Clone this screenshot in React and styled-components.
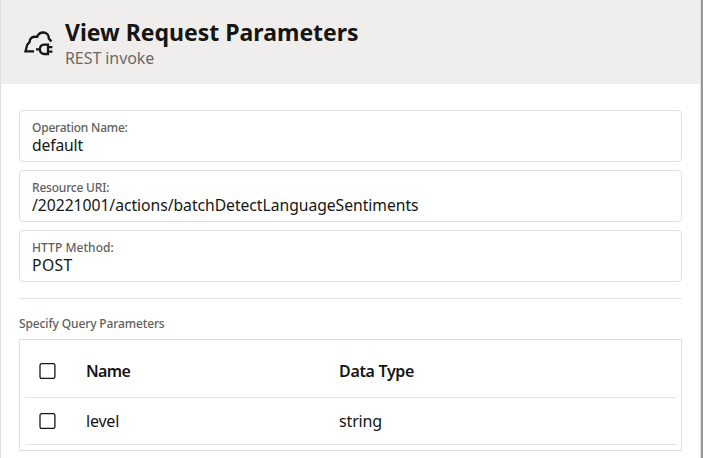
import React from 'react';
import styled, { createGlobalStyle } from 'styled-components';

const GlobalStyle = createGlobalStyle`
  * { box-sizing: border-box; }
  body {
    margin: 0;
    overflow: hidden;
    background: #fff;
    color: #161513;
    font-family: "Noto Sans", "Open Sans", sans-serif;
  }
`;

const Panel = styled.section`
  width: 703px;
  height: 458px;
  border-left: 1px solid #e0e0e0;
  border-right: 2px solid #979896;
  display: flex;
  flex-direction: column;
`;

const Inner = styled.div`
  flex: 1;
  border-right: 1px solid #e2e2e1;
`;

const Header = styled.header`
  height: 84px;
  padding: 18px 0 0 22px;
  display: flex;
  gap: 12px;
  background: #efeeec;
`;

const CloudIcon = styled.svg`
  width: 30px;
  height: 30px;
  margin-top: 11px;
  fill: none;
  stroke: #161513;
  stroke-width: 2.3;
`;

const Title = styled.h1`
  margin: 0;
  font-size: 23px;
  line-height: 29px;
  font-weight: 700;
  white-space: nowrap;
`;

const Subtitle = styled.div`
  font-size: 16px;
  line-height: 22px;
  color: #6b6967;
  letter-spacing: -0.08px;
`;

const Content = styled.main`
  padding: 26px 18px 0;
`;

const Fields = styled.div`
  display: grid;
  gap: 8px;
  padding-bottom: 16px;
  border-bottom: 1px solid #e4e3e2;
`;

const Field = styled.div`
  height: 52px;
  padding: 9px 12px 0;
  border: 1px solid #e1e0df;
  border-radius: 4px;
`;

const Label = styled.div`
  font-size: 12px;
  line-height: 16px;
  font-weight: 500;
  color: #62605d;
  letter-spacing: ${(p) => p.$track || '0'};
`;

const Value = styled.div`
  margin-top: -1px;
  font-size: 15.7px;
  line-height: 20px;
  letter-spacing: ${(p) => p.$track || '0'};
`;

const SectionLabel = styled(Label)`
  margin: 17px 0 7px;
`;

const Table = styled.div`
  height: 112px;
  padding: 0 5px;
  border: 1px solid #e1e0df;
`;

const Row = styled.div`
  height: ${(p) => p.$height}px;
  padding: ${(p) => p.$top}px 0 0 14px;
  display: grid;
  grid-template-columns: 47px 253px 1fr;
  align-items: start;
  border-bottom: 1px solid #e4e3e2;
`;

const CheckboxIcon = styled.svg`
  width: 17px;
  height: 17px;
  margin-top: 4px;
  fill: none;
  stroke: #161513;
  stroke-width: 1.3;
`;

const Checkbox = () => (
  <CheckboxIcon viewBox="0 0 17 17" role="checkbox" aria-checked="false">
    <rect x="1" y="0.7" width="14.9" height="14.7" rx="1.6" />
  </CheckboxIcon>
);

const Cell = styled.span`
  font-size: 16px;
  line-height: 24px;
  font-weight: ${(p) => (p.$head ? 600 : 400)};
  letter-spacing: ${(p) => p.$track || '0'};
`;

const fields = [
  { label: 'Operation Name:', value: 'default', labelTrack: '-0.22px', track: '-0.16px' },
  {
    label: 'Resource URI:',
    value: '/20221001/actions/batchDetectLanguageSentiments',
    labelTrack: '-0.2px',
    track: '-0.03px',
  },
  { label: 'HTTP Method:', value: 'POST', labelTrack: '0.06px', track: '0.4px' },
];

export default function App() {
  return (
    <Panel>
      <GlobalStyle />
      <Inner>
        <Header>
          <CloudIcon viewBox="0 0 30 30">
            <path d="M11 22.3H2.5L4.2 15.8L6.5 13.2C6.5 9.3 9.6 7 14 8C15.2 5 17.4 3.5 20.2 3.5C23.7 3.5 26.1 6.4 25.8 9.6L28.4 12.4" />
            <path d="M13 20.3H17M25 15.6H21C18.4 15.9 16.9 17.8 16.9 20.3C16.9 22.8 18.4 24.7 21 25H25ZM25 18.2H29.4M25 22.6H29.4" />
          </CloudIcon>
          <div>
            <Title>View Request Parameters</Title>
            <Subtitle>REST invoke</Subtitle>
          </div>
        </Header>
        <Content>
          <Fields>
            {fields.map((f) => (
              <Field key={f.label}>
                <Label $track={f.labelTrack}>{f.label}</Label>
                <Value $track={f.track}>{f.value}</Value>
              </Field>
            ))}
          </Fields>
          <SectionLabel $track="-0.13px">Specify Query Parameters</SectionLabel>
          <Table>
            <Row $height={58} $top={19}>
              <Checkbox />
              <Cell $head $track="-0.6px">Name</Cell>
              <Cell $head $track="-0.33px">Data Type</Cell>
            </Row>
            <Row $height={47} $top={11}>
              <Checkbox />
              <Cell $track="-0.2px">level</Cell>
              <Cell $track="-0.15px">string</Cell>
            </Row>
          </Table>
        </Content>
      </Inner>
    </Panel>
  );
}
